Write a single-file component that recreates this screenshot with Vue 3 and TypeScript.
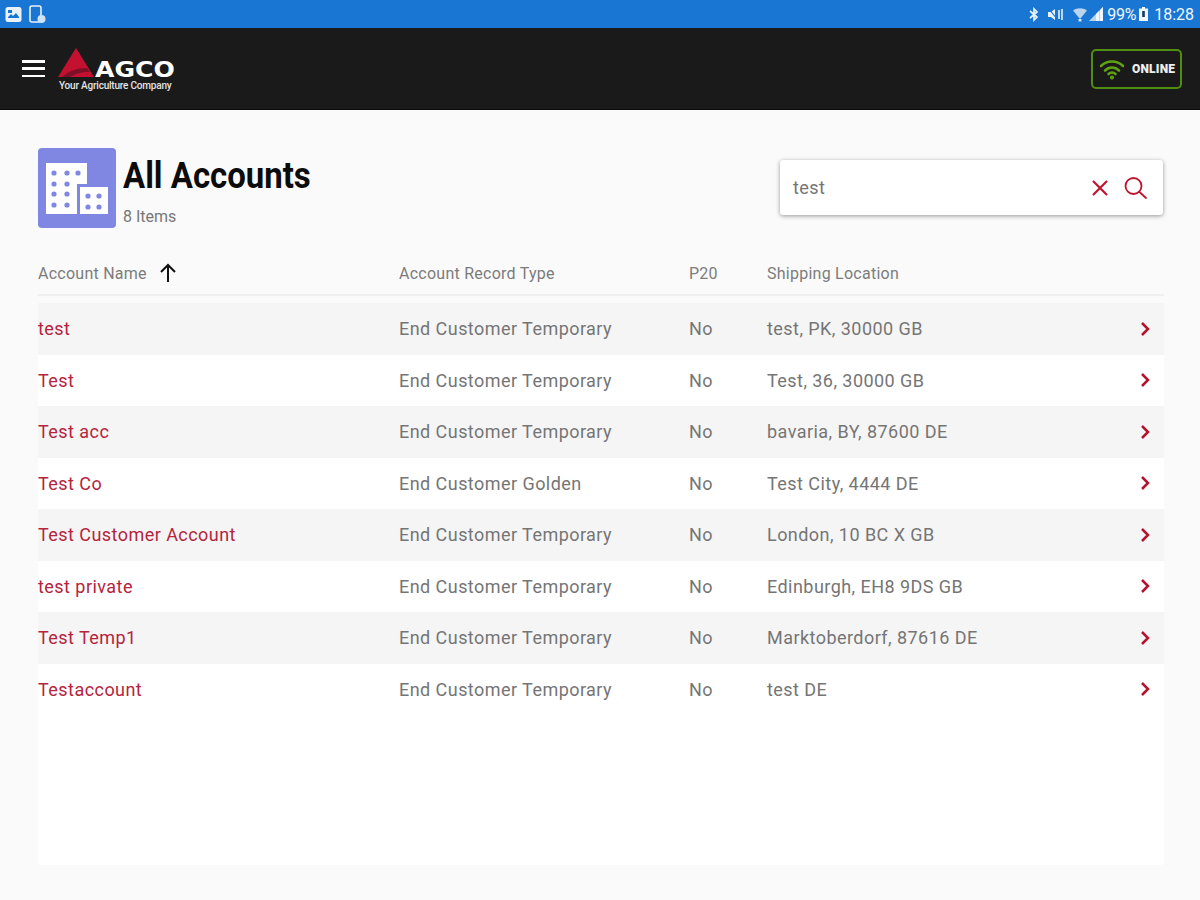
<template>
  <div class="page">
    <div class="status-bar">
      <div class="status-left">
        <svg width="17" height="17" viewBox="0 0 17 17">
          <rect x="0.5" y="1" width="16" height="15" rx="2.5" fill="#e9f2fb" />
          <rect x="3" y="4" width="4" height="3" fill="#1976d2" />
          <path d="M3 11l3-3 2 2 3-3 3 4v1H3z" fill="#1976d2" />
        </svg>
        <svg width="17" height="19" viewBox="0 0 17 19">
          <rect x="1" y="1" width="11" height="16" rx="2" fill="none" stroke="#e9f2fb" stroke-width="1.6" />
          <circle cx="12.5" cy="14" r="4" fill="#cfe2f6" />
        </svg>
      </div>
      <div class="status-right">
        <svg width="10" height="15" viewBox="0 0 10 15">
          <path d="M1 4l7 6-3 3V2l3 3-7 6" fill="none" stroke="#e9f2fb" stroke-width="1.7" />
        </svg>
        <svg class="gap-mute" width="15" height="13" viewBox="0 0 15 13">
          <path d="M0 4h3l4-3v11L3 9H0z" fill="#e9f2fb" />
          <path d="M1 1l8 10" stroke="#1976d2" stroke-width="1.2" />
          <path d="M11 2v9M14 1v11" stroke="#e9f2fb" stroke-width="1.6" />
        </svg>
        <svg class="gap-wifi" width="14" height="15" viewBox="0 0 14 15">
          <path d="M0 3.5C4 .5 10 .5 14 3.5L7 12z" fill="#b9d5f0" />
          <rect x="5.5" y="12" width="3" height="2.5" fill="#cfe2f6" />
        </svg>
        <svg width="14" height="14" viewBox="0 0 14 14">
          <path d="M0 14L14 0v14z" fill="#b9d5f0" />
          <path d="M7 14V7l3-3v10zM11 14V3l3-3v14z" fill="#f1f6fc" />
        </svg>
        <span class="battery-text">99%</span>
        <svg width="9" height="14" viewBox="0 0 9 14">
          <path d="M3 0h3v1.500h3V14H0V1.500h3z" fill="#f1f6fc" />
          <rect x="3.200" y="4" width="2.600" height="6" fill="#17395c" />
        </svg>
        <span class="clock">18:28</span>
      </div>
    </div>

    <header class="app-bar">
      <div class="brand">
        <button class="menu" type="button" aria-label="Menu">
          <span></span><span></span><span></span>
        </button>
        <div class="logo">
          <svg class="logo-mark" width="38" height="30" viewBox="0 0 38 30">
            <path d="M18 0l18 29H0z" fill="#c4112f" />
            <path d="M4 29c7-6 15-9 25-9l3 4c-9 0-15 2-20 5z" fill="#7d1026" />
          </svg>
          <div class="logo-text">
            <span class="logo-name">AGCO</span>
            <span class="logo-tag">Your Agriculture Company</span>
          </div>
        </div>
      </div>
      <div class="online">
        <svg width="26" height="22" viewBox="0 0 26 22" fill="none" stroke="#5fa30f" stroke-width="2.600" stroke-linecap="round">
          <path d="M2 8c6-6 16-6 22 0" />
          <path d="M6 12.500c4-4 10-4 14 0" />
          <path d="M9.500 16c2-1.800 5-1.800 7 0" />
          <circle cx="13" cy="19.500" r="0.800" fill="#5fa30f" />
        </svg>
        <span>ONLINE</span>
      </div>
    </header>

    <main class="content">
      <section class="heading">
        <div class="title-group">
          <div class="title-icon">
            <svg width="62" height="51" viewBox="0 0 62 51">
              <path d="M0 0H41V21H31V51H0Z" fill="#fff" />
              <rect x="34" y="24" width="28" height="27" fill="#fff" />
              <g fill="#7f87e2">
                <circle v-for="d in buildingDots" :key="d.x + '-' + d.y" :cx="d.x" :cy="d.y" r="2.600" />
              </g>
            </svg>
          </div>
          <div class="title-text">
            <h1>All Accounts</h1>
            <p>8 Items</p>
          </div>
        </div>
        <div class="search">
          <span class="search-value">test</span>
          <svg width="16" height="16" viewBox="0 0 16 16" fill="none" stroke="#c0142f" stroke-width="2.200">
            <path d="M1 1l14 14M15 1L1 15" />
          </svg>
          <svg width="23" height="22" viewBox="0 0 23 22" fill="none" stroke="#c0142f" stroke-width="1.800">
            <circle cx="9.500" cy="9" r="8" />
            <path d="M15.500 15l6.500 6" stroke-linecap="round" />
          </svg>
        </div>
      </section>

      <section class="table">
        <div class="table-head">
          <div class="name-head">
            Account Name
            <svg width="20" height="20" viewBox="0 0 20 20" fill="none" stroke="#111" stroke-width="2">
              <path d="M10 19V2M3 9l7-7 7 7" />
            </svg>
          </div>
          <div>Account Record Type</div>
          <div>P20</div>
          <div>Shipping Location</div>
        </div>
        <div class="rows">
          <div v-for="row in accounts" :key="row.name" class="row">
            <div class="name">{{ row.name }}</div>
            <div>{{ row.type }}</div>
            <div>No</div>
            <div>{{ row.location }}</div>
            <svg width="10" height="16" viewBox="0 0 10 16" fill="none" stroke="#b5122d" stroke-width="2.500">
              <path d="M2 2l6 6-6 6" />
            </svg>
          </div>
        </div>
      </section>
    </main>
  </div>
</template>

<script setup lang="ts">
interface Account {
  name: string;
  type: string;
  location: string;
}

const accounts: Account[] = [
  { name: "test", type: "End Customer Temporary", location: "test, PK, 30000 GB" },
  { name: "Test", type: "End Customer Temporary", location: "Test, 36, 30000 GB" },
  { name: "Test acc", type: "End Customer Temporary", location: "bavaria, BY, 87600 DE" },
  { name: "Test Co", type: "End Customer Golden", location: "Test City, 4444 DE" },
  { name: "Test Customer Account", type: "End Customer Temporary", location: "London, 10 BC X GB" },
  { name: "test private", type: "End Customer Temporary", location: "Edinburgh, EH8 9DS GB" },
  { name: "Test Temp1", type: "End Customer Temporary", location: "Marktoberdorf, 87616 DE" },
  { name: "Testaccount", type: "End Customer Temporary", location: "test DE" },
];

// window dots of the two buildings on the page icon
const buildingDots = [
  ...[[8, 10], [21, 10], [32, 10], [8, 21], [21, 21], [8, 31], [21, 31], [8, 42], [21, 42]].map(([x, y]) => ({ x, y })),
  ...[[42, 33], [53, 33], [42, 44], [53, 44]].map(([x, y]) => ({ x, y })),
];
</script>

<style scoped>
.page {
  width: 1200px;
  height: 900px;
  background: #fafafa;
  font-family: Roboto, "Liberation Sans", sans-serif;
  overflow: hidden;
}

.status-bar {
  height: 28px;
  background: #1976d2;
  display: flex;
  align-items: center;
  justify-content: space-between;
  padding: 0 5px;
  box-sizing: border-box;
  color: #f1f6fc;
}
.status-left {
  display: flex;
  align-items: center;
  gap: 7px;
}
.status-right {
  display: flex;
  align-items: center;
  gap: 2px;
  padding-right: 1px;
}
.gap-mute {
  margin-left: 7px;
}
.gap-wifi {
  margin-left: 8px;
}
.battery-text {
  font-size: 16px;
  margin-left: 2px;
  margin-right: 1px;
  letter-spacing: -0.3px;
}
.clock {
  font-size: 16px;
  margin-left: 4px;
}

.app-bar {
  height: 82px;
  background: #1a1a1a;
  display: flex;
  align-items: center;
  justify-content: space-between;
  padding: 0 18px 0 22px;
  box-sizing: border-box;
  border-bottom: 1px solid #0c0c0c;
}
.brand {
  display: flex;
  align-items: center;
  gap: 13px;
}
.menu {
  width: 23px;
  height: 17px;
  padding: 0;
  border: 0;
  background: none;
  display: flex;
  flex-direction: column;
  justify-content: space-between;
}
.menu span {
  display: block;
  height: 2.500px;
  background: #fff;
}
.logo {
  position: relative;
  width: 116px;
  height: 44px;
}
.logo-mark {
  position: absolute;
  left: 0;
  top: 1px;
}
.logo-text {
  position: absolute;
  left: 1px;
  top: 13px;
  width: 114px;
  color: #fff;
}
.logo-name {
  display: block;
  margin-left: 36px;
  font-family: "DejaVu Sans", sans-serif;
  font-weight: 700;
  font-size: 22px;
  line-height: 20px;
  transform: scaleX(1.14);
  transform-origin: left;
}
.logo-tag {
  display: block;
  font-size: 10px;
  line-height: 12px;
  font-weight: 500;
  white-space: nowrap;
  letter-spacing: -0.2px;
  color: #e4e4e4;
}
.online {
  width: 91px;
  height: 40px;
  box-sizing: border-box;
  border: 2px solid #4f8d13;
  border-radius: 5px;
  display: flex;
  align-items: center;
  gap: 7px;
  padding-left: 6px;
  color: #eee;
  font-size: 12px;
  font-weight: 900;
  letter-spacing: 0.2px;
}

.content {
  padding: 38px 36px 0 38px;
}
.heading {
  display: flex;
  justify-content: space-between;
  align-items: flex-start;
}
.title-group {
  display: flex;
  gap: 7px;
}
.title-icon {
  width: 78px;
  height: 80px;
  background: #7f87e2;
  border-radius: 4px;
  display: flex;
  align-items: center;
  justify-content: center;
}
.title-text h1 {
  margin: 7px 0 0;
  font-size: 36px;
  line-height: 42px;
  font-weight: 700;
  color: #0c0c0c;
  transform: scaleX(0.915);
  transform-origin: left;
  white-space: nowrap;
}
.title-text p {
  margin: 11px 0 0;
  font-size: 16px;
  line-height: 18px;
  color: #777;
}
.search {
  width: 383px;
  height: 55px;
  margin: 12px 1px 0 0;
  box-sizing: border-box;
  background: #fff;
  border-radius: 3px;
  box-shadow: 0 1px 4px rgba(0, 0, 0, 0.4);
  display: flex;
  align-items: center;
  padding: 0 16px 0 13px;
  gap: 16px;
}
.search-value {
  flex: 1;
  font-size: 18px;
  letter-spacing: 0.45px;
  color: #757575;
}

.table {
  margin-top: 28px;
  height: 609px;
  background: #fff;
  border-radius: 4px;
}
.table-head,
.row {
  display: grid;
  grid-template-columns: 361px 290px 78px 1fr 24px;
  align-items: center;
}
.table-head {
  height: 34px;
  padding-bottom: 4px;
  background: #fafafa;
  border-bottom: 2px solid #f0f0f0;
  font-size: 16px;
  letter-spacing: 0.25px;
  color: #7c7c7c;
}
.name-head {
  display: flex;
  align-items: center;
  gap: 11px;
}
.rows {
  padding-top: 7px;
  background: #fafafa;
}
.row {
  height: 51.500px;
  font-size: 18px;
  letter-spacing: 0.45px;
  color: #757575;
  white-space: nowrap;
  background: #fff;
}
.row:nth-child(odd) {
  background: #f5f5f5;
}
.name {
  color: #b5243c;
}
</style>
